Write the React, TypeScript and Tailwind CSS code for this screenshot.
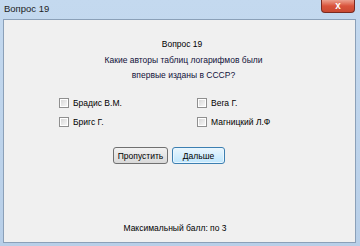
import React from 'react';

const options = [
  ['Брадис В.М.', 'Вега Г.'],
  ['Бригс Г.', 'Магницкий Л.Ф'],
];

const CheckBox: React.FC<{ label: string }> = ({ label }) => (
  <label className="flex items-center gap-[4px] h-[12px]">
    <span className="w-[10px] h-[10px] border border-[#8f8f8f] bg-white p-[1px]">
      <span className="block w-full h-full bg-gradient-to-br from-[#d8d8d8] to-[#f6f6f6]" />
    </span>
    <span>{label}</span>
  </label>
);

const App: React.FC = () => {
  return (
    <div className="w-[360px] h-[246px] bg-gradient-to-b from-[#c4d9ef] to-[#b8cfe8] flex flex-col pl-[3px] pr-[4px] pb-[3px] text-[8.5px] leading-[12px] text-black font-['Liberation_Sans',sans-serif]">
      {/* title bar */}
      <div className="h-[19px] flex items-start justify-between">
        <span className="pl-[1px] pt-[3px] text-[9.5px] text-[#1e1e1e]">Вопрос 19</span>
        <div className="w-[34px] h-[13px] mr-[1px] rounded-b-[4px] border border-t-0 border-[#7a2a20] bg-gradient-to-b from-[#eba08e] via-[#d9533b] to-[#c94a32] flex items-center justify-center">
          <span className="text-white text-[10px] font-bold leading-none">x</span>
        </div>
      </div>

      {/* client area */}
      <div className="flex-1 border border-[#8ba0b8] bg-[#f0f0f0] flex flex-col items-center">
        <div className="mt-[18px] ml-[5px]">Вопрос 19</div>
        <div className="mt-[3px] ml-[8px] text-center leading-[15px] text-[#10103a]">
          Какие авторы таблиц логарифмов были
          <br />
          впервые изданы в СССР?
        </div>

        <div className="mt-[14px] w-full grid grid-cols-[138px_1fr] gap-y-[7px] pl-[55px]">
          {options.flat().map((o) => (
            <CheckBox key={o} label={o} />
          ))}
        </div>

        <div className="mt-[19px] self-start ml-[109px] flex gap-[4px]">
          <button className="h-[17px] w-[55px] border border-[#707070] rounded-[3px] bg-gradient-to-b from-[#f2f2f2] to-[#d9d9d9]">
            Пропустить
          </button>
          <button className="h-[17px] w-[53px] border border-[#3c7fb1] rounded-[3px] bg-gradient-to-b from-[#eaf6fd] to-[#bee6fd] shadow-[inset_0_0_0_1px_#e9f6fe]">
            Дальше
          </button>
        </div>

        <div className="mt-auto mb-[8px] ml-[-9px]">Максимальный балл: по 3</div>
      </div>
    </div>
  );
};

export default App;
